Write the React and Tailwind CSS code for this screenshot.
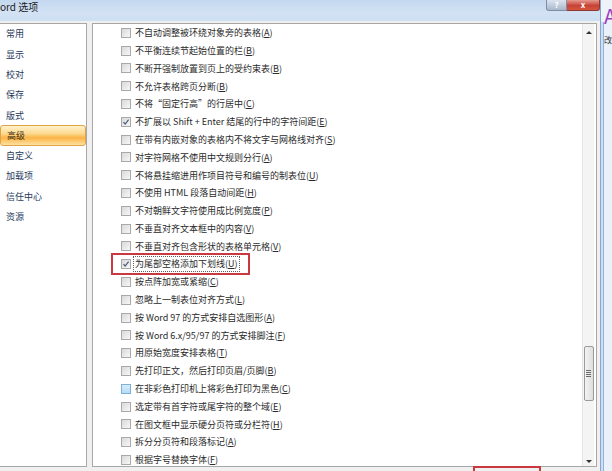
import React from 'react'

const NAV = ['常用', '显示', '校对', '保存', '版式', '高级', '自定义', '加载项', '信任中心', '资源']

// [文字, 助记键, 状态]
const OPTS = [
  ['不自动调整被环绕对象旁的表格', 'A'],
  ['不平衡连续节起始位置的栏', 'B'],
  ['不断开强制放置到页上的受约束表', 'B'],
  ['不允许表格跨页分断', 'B'],
  ['不将“固定行高”的行居中', 'C'],
  ['不扩展以 Shift + Enter 结尾的行中的字符间距', 'E', 'checked'],
  ['在带有内嵌对象的表格内不将文字与网格线对齐', 'S'],
  ['对字符网格不使用中文规则分行', 'A'],
  ['不将悬挂缩进用作项目符号和编号的制表位', 'U'],
  ['不使用 HTML 段落自动间距', 'H'],
  ['不对朝鲜文字符使用成比例宽度', 'P'],
  ['不垂直对齐文本框中的内容', 'V'],
  ['不垂直对齐包含形状的表格单元格', 'V'],
  ['为尾部空格添加下划线', 'U', 'checked', 'focus'],
  ['按点阵加宽或紧缩', 'C'],
  ['忽略上一制表位对齐方式', 'L'],
  ['按 Word 97 的方式安排自选图形', 'A'],
  ['按 Word 6.x/95/97 的方式安排脚注', 'F'],
  ['用原始宽度安排表格', 'T'],
  ['先打印正文，然后打印页眉/页脚', 'B'],
  ['在非彩色打印机上将彩色打印为黑色', 'C', 'hover'],
  ['选定带有首字符或尾字符的整个域', 'E'],
  ['在图文框中显示硬分页符或分栏符', 'H'],
  ['拆分分页符和段落标记', 'A'],
  ['根据字号替换字体', 'F'],
]

function Box({ state }) {
  if (state === 'hover') {
    return <span className="w-[10px] h-[10px] shrink-0 border border-[#7fb0d8] bg-[linear-gradient(to_bottom,#d6ecfa,#b4dcf5)]" />
  }
  return (
    <span className="w-[10px] h-[10px] shrink-0 border border-[#a9a9a9] bg-[linear-gradient(135deg,#d9d9d9,#f7f7f7)] flex items-center justify-center">
      {state === 'checked' && (
        <svg width="8" height="8" viewBox="0 0 8 8">
          <path d="M1.5 4.2 L3.2 6 L6.6 1.6" fill="none" stroke="#4a5a78" strokeWidth="1.2" />
        </svg>
      )}
    </span>
  )
}

export default function App() {
  return (
    <div className="w-[612px] h-[471px] overflow-hidden relative flex bg-[#dfe9f5]" style={{ fontFamily: '"Noto Sans CJK SC", "Noto Sans", sans-serif' }}>
      <div className="w-[601px] shrink-0 flex flex-col border-r border-[#86a6cf]">
        {/* 标题栏 */}
        <div className="h-[21px] flex items-start justify-between bg-[linear-gradient(to_bottom,#c3d8ef,#d3e2f4_60%,#cddff2)]">
          <span className="text-[10px] leading-[12px] pt-[1px] text-[#1b1b1b]">ord 选项</span>
          <div className="flex">
            <div className="w-[21px] h-[11px] rounded-bl-[3px] border border-t-0 border-[#7d8ea6] bg-[linear-gradient(to_bottom,#dbe4ef,#aab8cb)] flex items-center justify-center text-[8px] leading-none text-white font-bold">?</div>
            <div className="w-[33px] h-[11px] rounded-br-[3px] border border-t-0 border-l-0 border-[#8e3a33] bg-[linear-gradient(to_bottom,#e59a8f,#c74336_55%,#d4563f)] flex items-center justify-center text-[8px] leading-none text-white font-bold">x</div>
          </div>
        </div>
        {/* 主体 */}
        <div className="flex-1 bg-[#f0f0f0] flex pt-[2px] gap-[5px]">
          <div className="w-[87px] h-[444px] shrink-0 bg-white border-y border-r border-[#a7a7a7]">
            {NAV.map((n, i) => (
              <div key={n} className={`h-[20.3px] flex items-center pl-[6px] text-[9px] ${i === 5 ? 'rounded-[3px] border border-[#e2a546] bg-[linear-gradient(to_bottom,#fff2cc_0%,#fdd98f_40%,#fbb445_62%,#fde2a3_100%)] text-[#3a2a10]' : 'text-[#27395a]'}`}>
                {n}
              </div>
            ))}
          </div>
          <div className="w-[505px] h-[444px] shrink-0 bg-white border border-[#a7a7a7] flex relative pr-[2px]">
            <div className="flex-1 flex flex-col">
              {OPTS.map(([t, k, st, f], i) => (
                <div key={i} className="h-[17.8px] shrink-0 flex items-center pl-[28px] gap-[4px] text-[9px] text-[#2a2a2a] whitespace-nowrap">
                  <Box state={st} />
                  <span className={f ? 'border border-dotted border-[#606060] px-[1px] -ml-[2px] leading-[14px]' : ''}>
                    {t}(<span className="underline">{k}</span>)
                  </span>
                </div>
              ))}
            </div>
            {/* 滚动条 */}
            <div className="w-[12px] shrink-0 bg-[#f4f4f4] border-l border-[#e6e6e6] flex flex-col">
              <div className="h-[16px] flex items-center justify-center">
                <span className="w-0 h-0 border-x-[3px] border-x-transparent border-b-[3px] border-b-[#333]" />
              </div>
              <div className="mt-[306px] h-[55px] mx-[0.5px] rounded-[2px] border border-[#9a9a9a] bg-[linear-gradient(to_right,#f3f3f3,#dedede)] flex flex-col items-center justify-center gap-[1px]">
                <span className="w-[5px] h-px bg-[#6b6b6b]" />
                <span className="w-[5px] h-px bg-[#6b6b6b]" />
                <span className="w-[5px] h-px bg-[#6b6b6b]" />
                <span className="w-[5px] h-px bg-[#6b6b6b]" />
              </div>
              <div className="flex-1 flex items-end justify-center pb-[3px]">
                <span className="w-0 h-0 border-x-[3px] border-x-transparent border-t-[3px] border-t-[#333]" />
              </div>
            </div>
            {/* 红框标注 */}
            <div className="absolute left-[18px] top-[229px] w-[139px] h-[22px] border-2 border-[#c9393f]" />
          </div>
        </div>
      </div>
      {/* 背后的 Word 窗口 */}
      <div className="flex-1 flex flex-col overflow-hidden">
        <div className="h-[22px] bg-[#eef3fa] relative">
          <span className="absolute left-[3px] top-[6px] text-[20px] leading-none text-[#9b3fc0]">A</span>
        </div>
        <div className="flex-1 flex">
          <div className="w-[4px] bg-[#cfdff2]" />
          <div className="w-px bg-[#93b2da]" />
          <div className="flex-1 bg-[#eaf1f9] text-[8px] leading-none text-[#333] pt-[14px]">改</div>
        </div>
      </div>
      <div className="absolute left-[473px] top-[466px] w-[68px] h-[20px] border-2 border-[#c9393f]" />
    </div>
  )
}
